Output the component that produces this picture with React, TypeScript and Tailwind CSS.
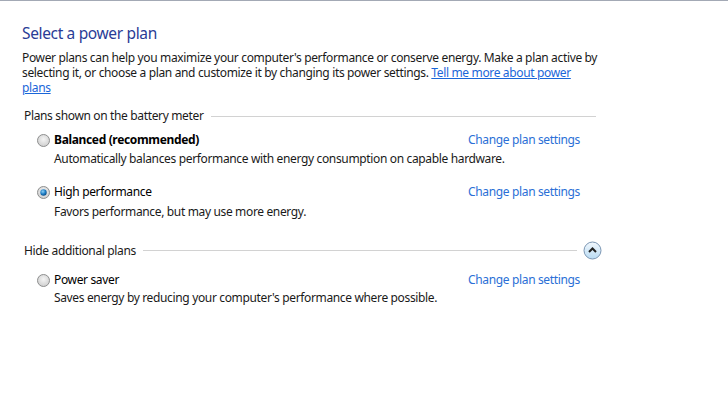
import React from "react";

const font = { fontFamily: '"Segoe UI", "Noto Sans", "Open Sans", sans-serif' };

function Radio({ checked }: { checked?: boolean }) {
  return (
    <svg width="13" height="13" viewBox="0 0 13 13" className="shrink-0">
      <defs>
        <radialGradient id="rg" cx="50%" cy="40%" r="60%">
          <stop offset="0%" stopColor="#f4f4f4" />
          <stop offset="100%" stopColor="#cfcfcf" />
        </radialGradient>
        <radialGradient id="dot" cx="40%" cy="35%" r="65%">
          <stop offset="0%" stopColor="#8fd0f5" />
          <stop offset="60%" stopColor="#1f7fc6" />
          <stop offset="100%" stopColor="#0d4f8a" />
        </radialGradient>
      </defs>
      <circle cx="6.5" cy="6.5" r="6" fill="url(#rg)" stroke="#8e8f8f" strokeWidth="1" />
      {checked && <circle cx="6.5" cy="6.5" r="3.2" fill="url(#dot)" />}
    </svg>
  );
}

function Plan({
  name,
  desc,
  bold,
  checked,
  descMt,
}: {
  name: string;
  desc: string;
  bold?: boolean;
  checked?: boolean;
  descMt: string;
}) {
  return (
    <div className="pl-[15px] w-[558px]">
      <div className="flex items-center h-[18px]">
        <Radio checked={checked} />
        <span className={"ml-[4px] text-black " + (bold ? "font-bold" : "")}>{name}</span>
        <span className="ml-auto text-[#2a6fd6]">Change plan settings</span>
      </div>
      <div className={"pl-[17px] leading-[16px] " + descMt}>{desc}</div>
    </div>
  );
}

export default function App() {
  return (
    <div
      className="w-[728px] h-[417px] bg-white border-t border-[#a3a9b5] text-[12px] tracking-[-0.35px] text-[#1a1a1a] overflow-hidden"
      style={font}
    >
      <div className="pl-[22px] pt-[22px]">
        <div className="text-[15.5px] text-[#2a3c96] leading-[20px]">Select a power plan</div>
        <p className="mt-[7px] leading-[15px] w-[620px] whitespace-nowrap">
          Power plans can help you maximize your computer's performance or conserve energy. Make a plan active by
          <br />
          selecting it, or choose a plan and customize it by changing its power settings.{" "}
          <span className="text-[#1a66d9] underline">
            Tell me more about power
            <br />
            plans
          </span>
        </p>
        <div className="flex items-center h-[16px] mt-[13px] w-[574px] pl-[2px]">
          <span>Plans shown on the battery meter</span>
          <div className="flex-1 h-px bg-[#d2d2d2] ml-[7px]" />
        </div>
        <div className="mt-[7px]">
          <Plan
            name="Balanced (recommended)"
            bold
            descMt="mt-[2px]"
            desc="Automatically balances performance with energy consumption on capable hardware."
          />
        </div>
        <div className="mt-[16px]">
          <Plan name="High performance" checked descMt="mt-[3px]" desc="Favors performance, but may use more energy." />
        </div>
        <div className="flex items-center h-[19px] mt-[21px] w-[580px] pl-[2px]">
          <span>Hide additional plans</span>
          <div className="flex-1 h-px bg-[#d2d2d2] ml-[7px] mr-[6px]" />
          <svg width="19" height="19" viewBox="0 0 19 19" className="shrink-0">
            <defs>
              <linearGradient id="cb" x1="0" y1="0" x2="0" y2="1">
                <stop offset="0%" stopColor="#f2f8fd" />
                <stop offset="100%" stopColor="#b9dbf3" />
              </linearGradient>
            </defs>
            <circle cx="9.5" cy="9.5" r="8.5" fill="url(#cb)" stroke="#7b96b3" />
            <path d="M6 11 L9.5 7.5 L13 11" fill="none" stroke="#222" strokeWidth="2" />
          </svg>
        </div>
        <div className="mt-[11px]">
          <Plan
            name="Power saver"
            descMt="mt-[1px]"
            desc="Saves energy by reducing your computer's performance where possible."
          />
        </div>
      </div>
    </div>
  );
}
